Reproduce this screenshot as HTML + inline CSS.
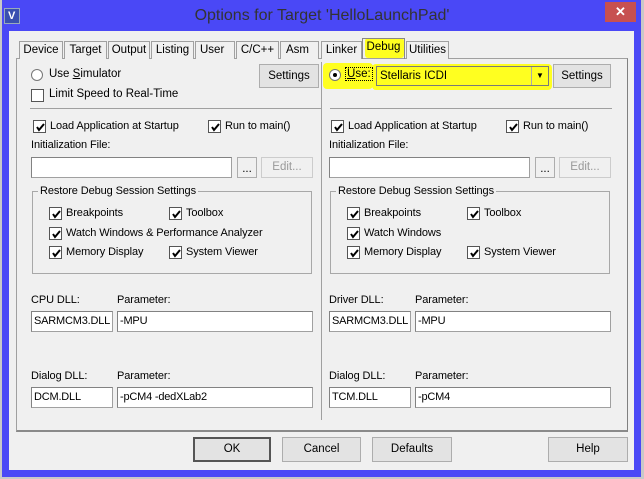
<!DOCTYPE html>
<html><head><meta charset="utf-8"><style>
*{box-sizing:border-box;margin:0;padding:0}
body{width:644px;height:479px;background:#c8c8c8;position:relative;overflow:hidden;font-family:"Liberation Sans",sans-serif;font-size:11px;color:#000}
.a{position:absolute;white-space:nowrap}
.win{position:absolute;left:2px;top:0;width:639px;height:477px;background:#4a48f6}
.client{position:absolute;left:9px;top:31px;width:625px;height:439px;background:#f0f0f0}
.btn{position:absolute;background:#e3e3e3;border:1px solid #adadad;text-align:center;font-size:11.5px}
.inp{position:absolute;background:#fff;border:1px solid #a0a0a0;border-top-color:#828282;border-left-color:#828282;padding:3px 2px;font-size:11px;letter-spacing:-0.2px;overflow:hidden}
.cb{position:absolute;width:13px;height:13px;background:#fff;border:1px solid #555}
.cb svg{position:absolute;left:1px;top:1px}
.tab{position:absolute;top:41px;height:18px;border:1px solid #a0a0a0;border-bottom:none;background:#f0f0f0;text-align:center;font-size:11.5px;line-height:16px}
.hl{position:absolute;background:#ffff20}
</style></head><body>
<div class="win"></div>
<div class="a" style="left:4px;top:8px;width:16px;height:16px;background:#3a4fb0;border:1px solid #9ab"><span style="color:#fff;font-weight:bold;font-size:11px;position:absolute;left:3px;top:1px">V</span></div>
<div class="a" style="left:0;width:644px;top:7px;text-align:center;font-size:16px;color:#333">Options for Target 'HelloLaunchPad'</div>
<div class="a" style="left:605px;top:2px;width:31px;height:20px;background:#c75050;color:#fff;text-align:center;font-weight:bold;font-size:13px;line-height:20px">✕</div>
<div class="client"></div>

<div class="hl" style="left:365px;top:38px;width:39px;height:20px;border-radius:3px"></div>
<div class="hl" style="left:323px;top:63px;width:50px;height:26px;border-radius:4px"></div>
<div class="hl" style="left:372px;top:64px;width:180px;height:26px;border-radius:4px"></div>

<div class="a" style="left:16px;top:58px;width:612px;height:374px;border:1px solid #a0a0a0;border-right-color:#808080;border-bottom:2px solid #8a8a8a"></div>
<div class="a" style="left:321px;top:62px;width:1px;height:358px;background:#a0a0a0"></div>

<div class="tab" style="left:19px;width:44px">Device</div>
<div class="tab" style="left:64px;width:43px">Target</div>
<div class="tab" style="left:108px;width:42px">Output</div>
<div class="tab" style="left:151px;width:43px">Listing</div>
<div class="tab" style="left:195px;width:40px;text-align:left;padding-left:4px">User</div>
<div class="tab" style="left:236px;width:43px">C/C++</div>
<div class="tab" style="left:280px;width:39px;text-align:left;padding-left:5px">Asm</div>
<div class="tab" style="left:321px;width:41px">Linker</div>
<div class="tab" style="left:362px;top:38px;height:21px;width:43px;background:transparent;border-color:#888">Debug</div>
<div class="tab" style="left:406px;width:43px">Utilities</div>

<div class="a" style="left:31px;top:69px;width:12px;height:12px;border-radius:50%;background:#fff;border:1px solid #777"></div>
<div class="a" style="left:49px;top:68px;font-size:11.5px">Use <u>S</u>imulator</div>
<div class="btn" style="left:259px;top:64px;width:60px;height:24px;line-height:22px">Settings</div>
<div class="cb" style="left:31px;top:89px"></div>
<div class="a" style="left:49px;top:88px;font-size:11.5px">Limit Speed to Real-Time</div>
<div class="a" style="left:30px;top:108px;width:291px;height:1px;background:#a0a0a0"></div>
<div class="a" style="left:330px;top:108px;width:282px;height:1px;background:#a0a0a0"></div>

<div class="a" style="left:329px;top:69px;width:12px;height:12px;border-radius:50%;background:#fff;border:1px solid #777"><div style="position:absolute;left:3px;top:3px;width:4px;height:4px;border-radius:50%;background:#000"></div></div>
<div class="a" style="left:345px;top:67px;font-size:11.5px;border:1px dotted #000;padding:0 1px"><u>U</u>se:</div>
<div class="a" style="left:376px;top:66px;width:173px;height:20px;border:1px solid #7a7a7a;font-size:11.5px;padding:3px 3px">Stellaris ICDI</div>
<div class="a" style="left:531px;top:67px;width:17px;height:18px;border-left:1px solid #aaa;text-align:center;font-size:8px;line-height:18px">▼</div>
<div class="btn" style="left:553px;top:64px;width:58px;height:24px;line-height:22px">Settings</div>

<div id="L"></div>

<script>
var ck='<svg width="11" height="11" viewBox="0 0 11 11"><path d="M2 5 L4 8 L9 2" stroke="#000" stroke-width="2" fill="none"/></svg>';
function side(o,cb3,dll1,p1,dll2,p2,lbl1){
 var h='';
 function c(x,y,t){h+='<div class="cb" style="left:'+(x+o)+'px;top:'+y+'px">'+ck+'</div><div class="a" style="left:'+(x+o+17)+'px;top:'+(y)+'px;font-size:11px;letter-spacing:-0.1px">'+t+'</div>';}
 function t(x,y,s,st){h+='<div class="a" style="left:'+(x+o)+'px;top:'+y+'px;font-size:11px;letter-spacing:-0.1px;'+(st||'')+'">'+s+'</div>';}
 c(33,120,'Load Application at Startup');c(208,120,'Run to main()');
 t(31,139,'Initialization File:');
 h+='<div class="inp" style="left:'+(31+o)+'px;top:157px;width:201px;height:21px"></div>';
 h+='<div class="btn" style="left:'+(237+o)+'px;top:157px;width:20px;height:21px;line-height:22px;background:#f0f0f0">...</div>';
 h+='<div class="btn" style="left:'+(261+o)+'px;top:157px;width:52px;height:21px;line-height:19px;color:#999;background:#f0f0f0;border-color:#ccc">Edit...</div>';
 h+='<div class="a" style="left:'+(32+o)+'px;top:191px;width:280px;height:83px;border:1px solid #a8a8a8"></div>';
 t(38,185,'Restore Debug Session Settings','background:#f0f0f0;padding:0 2px');
 c(49,207,'Breakpoints');c(169,207,'Toolbox');c(49,227,cb3);c(49,246,'Memory Display');c(169,246,'System Viewer');
 t(31,294,lbl1);t(117,294,'Parameter:');
 h+='<div class="inp" style="left:'+(31+o)+'px;top:311px;width:82px;height:21px">'+dll1+'</div>';
 h+='<div class="inp" style="left:'+(117+o)+'px;top:311px;width:196px;height:21px">'+p1+'</div>';
 t(31,370,'Dialog DLL:');t(117,370,'Parameter:');
 h+='<div class="inp" style="left:'+(31+o)+'px;top:387px;width:82px;height:21px">'+dll2+'</div>';
 h+='<div class="inp" style="left:'+(117+o)+'px;top:387px;width:196px;height:21px">'+p2+'</div>';
 return h;}
document.getElementById('L').innerHTML=side(0,'Watch Windows &amp; Performance Analyzer','SARMCM3.DLL','-MPU','DCM.DLL','-pCM4 -dedXLab2','CPU DLL:')+side(298,'Watch Windows','SARMCM3.DLL','-MPU','TCM.DLL','-pCM4','Driver DLL:');
</script>

<div class="btn" style="left:193px;top:437px;width:78px;height:25px;line-height:21px;border:2px solid #555">OK</div>
<div class="btn" style="left:282px;top:437px;width:79px;height:25px;line-height:23px">Cancel</div>
<div class="btn" style="left:372px;top:437px;width:80px;height:25px;line-height:23px">Defaults</div>
<div class="btn" style="left:548px;top:437px;width:80px;height:25px;line-height:23px">Help</div>
</body></html>
